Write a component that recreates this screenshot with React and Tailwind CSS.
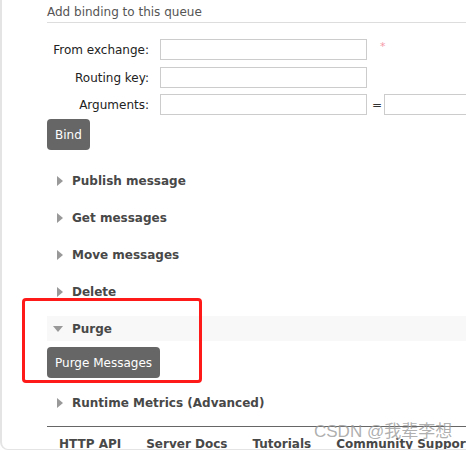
import React from "react";

const Tri = () => (
  <svg width="6" height="10" viewBox="0 0 6 10" className="shrink-0">
    <polygon points="0,0 6,5 0,10" fill="#999" />
  </svg>
);
const TriDown = () => (
  <svg width="10" height="6" viewBox="0 0 10 6" className="shrink-0">
    <polygon points="0,0 10,0 5,6" fill="#999" />
  </svg>
);

function Section({ title }) {
  return (
    <div className="flex items-center h-[25px] pl-[10px] gap-[9px]">
      <Tri />
      <span className="font-bold text-[12px] text-[#484848]">{title}</span>
    </div>
  );
}

export default function App() {
  return (
    <div
      className="relative w-[466px] h-[450px] overflow-hidden bg-white"
      style={{ fontFamily: '"DejaVu Sans", Verdana, sans-serif' }}
    >
      <div className="absolute inset-0 border-l-2 border-b border-[#e4e4e4] rounded-bl-[8px] pointer-events-none" />
      <div className="pl-[47px]">
        <div className="pt-[3px] h-[23px] border-b border-[#dddddd] text-[12px] text-[#555] leading-[18px]">
          Add binding to this queue
        </div>
        <div className="mt-[16px] flex flex-col gap-[7px] text-[12px] text-[#222]">
          <div className="flex items-center h-[21px]">
            <span className="shrink-0 w-[102px] text-right">From exchange:</span>
            <input className="shrink-0 ml-[11px] w-[207px] h-[21px] border border-[#cccccc] outline-none" />
            <span className="ml-[13px] text-[#f59aa8] text-[11px] -mt-[4px]">*</span>
          </div>
          <div className="flex items-center h-[21px]">
            <span className="shrink-0 w-[102px] text-right">Routing key:</span>
            <input className="shrink-0 ml-[11px] w-[207px] h-[21px] border border-[#cccccc] outline-none" />
          </div>
          <div className="flex items-center h-[21px] -mt-[1px]">
            <span className="shrink-0 w-[102px] text-right">Arguments:</span>
            <input className="shrink-0 ml-[11px] w-[207px] h-[21px] border border-[#cccccc] outline-none" />
            <span className="shrink-0 ml-[5px] w-[12px] text-[#333]">=</span>
            <input className="shrink-0 w-[120px] h-[21px] border border-[#cccccc] outline-none" />
          </div>
        </div>
        <button className="mt-[4px] h-[31px] px-[8px] rounded-[4px] bg-[#666666] text-white text-[12px]">
          Bind
        </button>
        <div className="mt-[18px] flex flex-col gap-[12px]">
          <Section title="Publish message" />
          <Section title="Get messages" />
          <Section title="Move messages" />
          <Section title="Delete" />
        </div>
        <div className="mt-[12px] flex items-center h-[25px] pl-[6px] gap-[9px] bg-[#f8f8f8]">
          <TriDown />
          <span className="font-bold text-[12px] text-[#484848]">Purge</span>
        </div>
        <button className="mt-[6px] h-[31px] px-[8px] rounded-[4px] bg-[#666666] text-white text-[12px]">
          Purge Messages
        </button>
        <div className="mt-[12px]">
          <Section title="Runtime Metrics (Advanced)" />
        </div>
        <div className="mt-[11px] border-t border-[#666666] flex gap-[25px] pl-[12px] pt-[8px] whitespace-nowrap font-bold text-[12px] text-[#484848]">
          <span>HTTP API</span>
          <span>Server Docs</span>
          <span>Tutorials</span>
          <span>Community Support</span>
        </div>
      </div>
      <div className="absolute left-[22px] top-[298px] w-[180px] h-[85px] border-[3px] border-[#ff1a1a] rounded-[4px]" />
      <div
        className="absolute left-[314px] top-[419px] text-[17px] text-[#9a9a9a]/80 whitespace-nowrap"
        style={{ fontFamily: '"Liberation Sans", "Noto Sans CJK SC", sans-serif' }}
      >
        CSDN @我辈李想
      </div>
    </div>
  );
}
